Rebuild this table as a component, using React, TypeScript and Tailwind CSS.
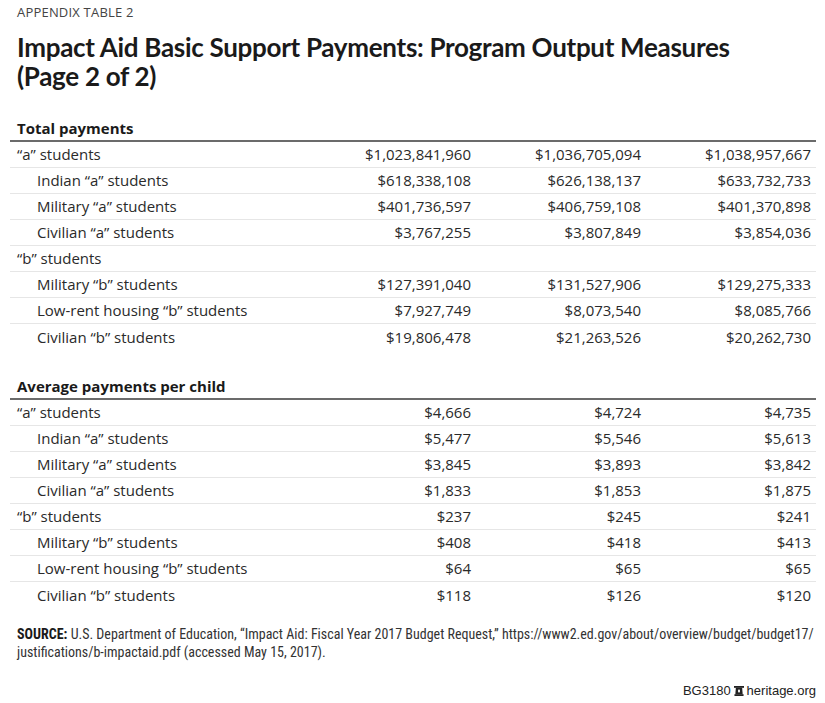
import React from 'react';

type Row = { label: string; indent?: boolean; values: string[] };

const totalRows: Row[] = [
  { label: '“a” students', values: ['$1,023,841,960', '$1,036,705,094', '$1,038,957,667'] },
  { label: 'Indian “a” students', indent: true, values: ['$618,338,108', '$626,138,137', '$633,732,733'] },
  { label: 'Military “a” students', indent: true, values: ['$401,736,597', '$406,759,108', '$401,370,898'] },
  { label: 'Civilian “a” students', indent: true, values: ['$3,767,255', '$3,807,849', '$3,854,036'] },
  { label: '“b” students', values: ['', '', ''] },
  { label: 'Military “b” students', indent: true, values: ['$127,391,040', '$131,527,906', '$129,275,333'] },
  { label: 'Low-rent housing “b” students', indent: true, values: ['$7,927,749', '$8,073,540', '$8,085,766'] },
  { label: 'Civilian “b” students', indent: true, values: ['$19,806,478', '$21,263,526', '$20,262,730'] },
];

const averageRows: Row[] = [
  { label: '“a” students', values: ['$4,666', '$4,724', '$4,735'] },
  { label: 'Indian “a” students', indent: true, values: ['$5,477', '$5,546', '$5,613'] },
  { label: 'Military “a” students', indent: true, values: ['$3,845', '$3,893', '$3,842'] },
  { label: 'Civilian “a” students', indent: true, values: ['$1,833', '$1,853', '$1,875'] },
  { label: '“b” students', values: ['$237', '$245', '$241'] },
  { label: 'Military “b” students', indent: true, values: ['$408', '$418', '$413'] },
  { label: 'Low-rent housing “b” students', indent: true, values: ['$64', '$65', '$65'] },
  { label: 'Civilian “b” students', indent: true, values: ['$118', '$126', '$120'] },
];

function Section({ title, rows }: { title: string; rows: Row[] }) {
  return (
    <div className="ml-[10px] w-[806px]">
      {/* Section heading with dark rule */}
      <div className="h-[26px] flex items-end pl-[7px] pb-[4px] border-b-2 border-[#6b6b6b] text-[15px] font-bold text-[#1a1a1a] leading-none">
        {title}
      </div>
      {rows.map((row, i) => (
        <div
          key={row.label + i}
          className={`grid grid-cols-[296px_170px_170px_170px] items-center h-[26px] text-[15px] text-[#2a2a2a] ${
            i < rows.length - 1 ? 'border-b border-[#e6e6e6]' : ''
          }`}
        >
          <div className={row.indent ? 'pl-[27px]' : 'pl-[7px]'}>{row.label}</div>
          {row.values.map((v, j) => (
            <div key={j} className="text-right pr-[5px]">
              {v}
            </div>
          ))}
        </div>
      ))}
    </div>
  );
}

export default function App() {
  return (
    <div className="w-[825px] h-[703px] bg-white overflow-hidden font-['Open_Sans',sans-serif]">
      {/* Heading */}
      <div className="px-[17px] pt-[4px]">
        <div className="text-[13px] leading-[16px] text-[#444] tracking-[0.2px]">APPENDIX TABLE 2</div>
        <h1 className="mt-[13px] text-[26px] leading-[29px] font-bold text-[#1a1a1a] font-['Lato',sans-serif] tracking-[-0.3px]">
          <div>Impact Aid Basic Support Payments: Program Output Measures</div>
          <div>(Page 2 of 2)</div>
        </h1>
      </div>

      <div className="mt-[25px]">
        <Section title="Total payments" rows={totalRows} />
      </div>
      <div className="mt-[24px]">
        <Section title="Average payments per child" rows={averageRows} />
      </div>

      {/* Source note */}
      <div className="mt-[17px] pl-[17px] text-[14px] leading-[18px] text-[#333] font-['Liberation_Sans_Narrow','Roboto_Condensed',sans-serif] whitespace-nowrap">
        <div>
          <span className="font-bold text-[#1a1a1a]">SOURCE:</span> U.S. Department of Education, “Impact Aid: Fiscal Year 2017 Budget Request,” https://www2.ed.gov/about/overview/budget/budget17/
        </div>
        <div>justifications/b-impactaid.pdf (accessed May 15, 2017).</div>
      </div>

      {/* Footer */}
      <div className="mt-[20px] pr-[9px] flex justify-end items-center gap-[3px] text-[13px] text-[#222] font-['Liberation_Sans_Narrow',sans-serif]">
        <span>BG3180</span>
        <svg width="10" height="10" viewBox="0 0 11 11" aria-hidden="true">
          <rect x="0" y="0" width="11" height="2" fill="#222" />
          <path d="M2 2 L9 2 L9.5 9 L1.5 9 Z" fill="#222" />
          <rect x="0.5" y="9" width="10" height="2" fill="#222" />
          <rect x="4.5" y="4" width="2" height="3" fill="#fff" />
        </svg>
        <span>heritage.org</span>
      </div>
    </div>
  );
}
